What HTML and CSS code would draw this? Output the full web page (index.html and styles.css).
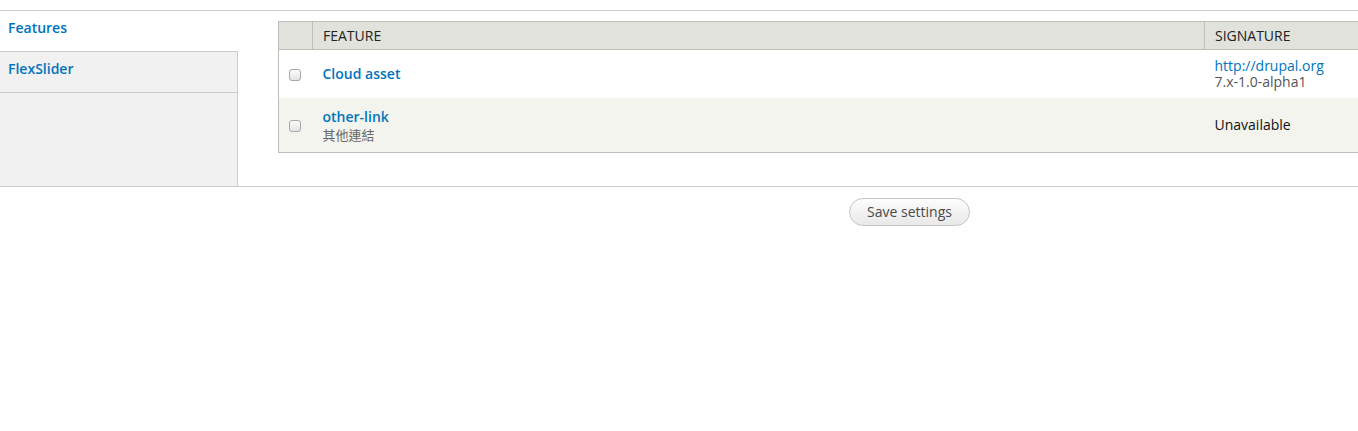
FILE: index.html
```html
<!DOCTYPE html>
<html lang="en">
<head>
    <meta charset="UTF-8">
    <title>Features</title>
    <link rel="stylesheet" href="styles.css">
</head>
<body>
    <form class="page-form">
        <!-- Vertical tabs -->
        <div class="vertical-tabs">
            <ul class="tab-list">
                <li class="tab selected"><a href="#">Features</a></li>
                <li class="tab"><a href="#">FlexSlider</a></li>
            </ul>
            <div class="tab-panes">
                <table class="feature-table">
                    <thead>
                        <tr>
                            <th class="col-check"></th>
                            <th class="col-feature">Feature</th>
                            <th class="col-signature">Signature</th>
                        </tr>
                    </thead>
                    <tbody>
                        <tr class="odd">
                            <td class="col-check"><input type="checkbox"></td>
                            <td><a href="#" class="feature-name">Cloud asset</a></td>
                            <td class="signature">
                                <a href="#">http://drupal.org</a>
                                <div class="version">7.x-1.0-alpha1</div>
                            </td>
                        </tr>
                        <tr class="even">
                            <td class="col-check"><input type="checkbox"></td>
                            <td>
                                <a href="#" class="feature-name">other-link</a>
                                <div class="description">其他連結</div>
                            </td>
                            <td class="signature">Unavailable</td>
                        </tr>
                    </tbody>
                </table>
            </div>
        </div>

        <div class="form-actions">
            <button type="submit" class="button">Save settings</button>
        </div>
    </form>
</body>
</html>
```

FILE: styles.css
```css
/* General Styles */
body {
    font-family: "Open Sans", "Noto Sans", sans-serif;
    font-size: 13px;
    color: #333;
    margin: 0;
    padding: 10px 0 0;
    background: #fff;
}

a {
    color: #0074bd;
    text-decoration: none;
}

/* Vertical Tabs */
.vertical-tabs {
    display: flex;
    border-top: 1px solid #ccc;
    border-bottom: 1px solid #ccc;
    height: 175px;
}

.tab-list {
    list-style: none;
    margin: 0;
    padding: 0;
    width: 237px;
    flex-shrink: 0;
    background: #f1f1f1;
    border-right: 1px solid #ccc;
}

.tab {
    height: 40px;
    border-bottom: 1px solid #ccc;
    background: #f1f1f1;
}

.tab a {
    display: block;
    padding: 7px 8px 0;
    font-size: 14px;
    font-weight: 600;
    line-height: 20px;
}

.tab.selected {
    background: #fff;
    margin-right: -1px;
    position: relative;
}

.tab-panes {
    flex: 1;
    padding: 10px 0 0 40px;
}

/* Feature Table */
.feature-table {
    width: 100%;
    border-collapse: collapse;
    border: 1px solid #bebfb9;
    border-right: 0;
}

.feature-table th {
    background: #e1e2dc;
    text-align: left;
    font-weight: normal;
    text-transform: uppercase;
    font-size: 14px;
    color: #222;
    height: 27px;
    padding: 0 10px;
    border-bottom: 1px solid #bebfb9;
    border-left: 1px solid #bebfb9;
}

.feature-table th.col-check {
    border-left: 0;
}

.feature-table td {
    padding: 0 10px;
    vertical-align: middle;
}

.col-check {
    width: 13px;
}

.col-signature {
    width: 133px;
}

.feature-table tr.odd {
    background: #fff;
    height: 48px;
}

.feature-table tr.even {
    background: #f3f4ee;
    height: 55px;
}

.feature-name {
    font-size: 14px;
    font-weight: 600;
}

.even .feature-name {
    display: block;
    margin-top: 2px;
}

.description {
    color: #666;
    font-family: "Open Sans", "Noto Sans CJK TC", sans-serif;
    font-size: 13px;
    line-height: 18px;
}

.signature {
    color: #111;
    font-size: 14px;
    line-height: 16px;
}

.signature a {
    display: block;
    margin-top: 1px;
}

.version {
    color: #555;
    font-size: 14px;
}

input[type="checkbox"] {
    appearance: none;
    width: 12px;
    height: 12px;
    margin: 3px 0 0;
    border: 1px solid #a8a8a8;
    border-radius: 3px;
    background: linear-gradient(#fcfcfc, #e4e4e4);
    display: block;
}

/* Form Actions */
.form-actions {
    padding: 11px 0 0 849px;
}

.button {
    font-family: "Open Sans", "Noto Sans", sans-serif;
    font-size: 14px;
    color: #4a4a4a;
    width: 121px;
    height: 28px;
    padding: 0 0 2px;
    border: 1px solid #c5c5c5;
    border-radius: 14px;
    background: linear-gradient(#fdfdfd, #e8e8e8);
    cursor: pointer;
}
```
